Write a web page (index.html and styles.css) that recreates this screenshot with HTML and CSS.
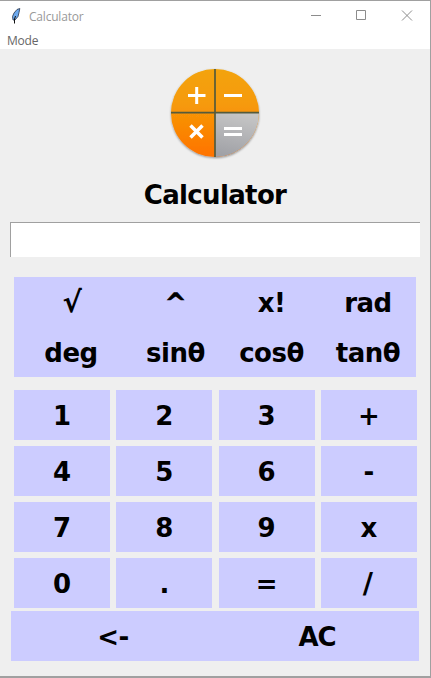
FILE: index.html
```html
<!DOCTYPE html>
<html lang="en">
<head>
<meta charset="utf-8">
<title>Calculator</title>
<link rel="stylesheet" href="styles.css">
</head>
<body>
<div class="window">
  <header class="titlebar">
    <svg class="feather" width="12" height="18" viewBox="0 0 12 18"><path d="M9.800 1.500 L7 2.500 L4 6 L2.500 9.500 L3 13 L5 13 L8 9.500 L9 5.500 Z" fill="#6ca9ee" stroke="#26324a" stroke-width=".8"/><path d="M5.500 9 L4.500 12 L4.500 16.500" fill="none" stroke="#111" stroke-width="1"/></svg>
    <span class="title">Calculator</span>
    <svg class="controls" width="104" height="12" viewBox="0 0 104 12"><g fill="none" stroke="#8c8c8c"><path d="M1 5.500h10M46.500 .5h9v9h-9z"/><path d="M92 .5l10 10M102 .5l-10 10"/></g></svg>
  </header>
  <nav class="menu">Mode</nav>
  <main>
    <svg class="logo" width="98" height="98" viewBox="0 0 98 98">
      <defs>
        <linearGradient id="orange" x1="0" y1="0" x2="0" y2="1"><stop offset="0" stop-color="#f3a307"/><stop offset=".4" stop-color="#f69a08"/><stop offset="1" stop-color="#ff7200"/></linearGradient>
        <linearGradient id="gray" x1=".6" y1="0" x2=".4" y2="1"><stop offset="0" stop-color="#c6c6c6"/><stop offset="1" stop-color="#a0a1a6"/></linearGradient>
        <filter id="shadow" x="-10%" y="-10%" width="120%" height="120%"><feDropShadow dx="0" dy="1" stdDeviation="1" flood-opacity=".4"/></filter>
      </defs>
      <g filter="url(#shadow)"><circle cx="49" cy="48" r="44" fill="url(#orange)"/><path d="M49 48H93A44 44 0 0 1 49 92Z" fill="url(#gray)"/></g>
      <path d="M49 4V92M5 47.700H93" stroke="#545b3c" stroke-width="1.700"/>
      <g stroke="#fff" stroke-width="3" fill="none"><path d="M22 30.500H39.500M30.700 22V39M58 30.500H76M58 63.500H76M58 69.500H76"/><path d="M24.500 60.500L36.500 72.500M36.500 60.500L24.500 72.500" stroke-width="3.500"/></g>
    </svg>
    <h1>Calculator</h1>
    <input class="display" type="text" aria-label="Display">
    <section class="functions">
      <span class="root">√</span><span class="power">^</span><span>x!</span><span class="angle">rad</span>
      <span class="angle">deg</span><span>sinθ</span><span>cosθ</span><span class="angle">tanθ</span>
    </section>
    <section class="keys">
      <button>1</button><button>2</button><button>3</button><button>+</button>
      <button>4</button><button>5</button><button>6</button><button>-</button>
      <button>7</button><button>8</button><button>9</button><button>x</button>
      <button>0</button><button>.</button><button>=</button><button class="divide">/</button>
    </section>
    <section class="actions"><button>&lt;-</button><button class="clear">AC</button></section>
  </main>
</div>
</body>
</html>
```
FILE: styles.css
```css
* { box-sizing: border-box; }
body { margin: 0; background: #efefef; }
.window {
  width: 431px;
  height: 678px;
  border: solid #a0a0a0;
  border-width: 1px 1px 2px 0;
  background: #efefef;
  overflow: hidden;
  font-family: "DejaVu Sans", sans-serif;
}
.titlebar {
  display: flex;
  align-items: center;
  height: 30px;
  padding: 0 16px 0 10px;
  background: #fff;
}
.title {
  margin-left: 7px;
  font: 12px "Open Sans", sans-serif;
  letter-spacing: -.2px;
  color: #999;
}
.controls { margin-left: auto; }
.menu {
  height: 18px;
  padding-left: 7px;
  background: #fff;
  color: #666;
  font: 12px/19px "Open Sans", sans-serif;
  letter-spacing: -.2px;
}
main { display: flex; flex-direction: column; }
.logo { margin: 16px 0 0 166px; }
h1 {
  margin: 15px 0 0;
  height: 34px;
  font-size: 26px;
  line-height: 34px;
  letter-spacing: -.65px;
  text-align: center;
}
.display {
  width: 410px;
  height: 35px;
  margin: 10px 0 0 10px;
  padding: 0 4px;
  border: solid #a0a0a0;
  border-width: 1px 0 0 1px;
  border-radius: 0;
  background: #fff;
  font: bold 24px "DejaVu Sans", sans-serif;
}
.functions {
  display: grid;
  grid-template-columns: 112px 99px 93px 98px;
  grid-template-rows: 50px 50px;
  width: 402px;
  margin: 20px 0 0 14px;
  background: #ccf;
  font-size: 26px;
  font-weight: bold;
  line-height: 52px;
  letter-spacing: -.5px;
  text-align: center;
}
.root {
  padding-left: 4px;
  font-size: 29px;
  line-height: 50px;
}
.power { -webkit-text-stroke: .6px #000; }
.angle { padding-left: 2px; }
.keys {
  display: grid;
  grid-template-columns: repeat(4, 96px);
  grid-auto-rows: 50px;
  justify-content: space-between;
  row-gap: 6px;
  width: 403px;
  margin: 13px 0 0 14px;
}
button {
  border: 0;
  padding: 2px 0 0;
  background: #ccf;
  color: #000;
  font: bold 26px/48px "DejaVu Sans", sans-serif;
}
.divide {
  padding-right: 2px;
  font-size: 28px;
}
.actions {
  display: grid;
  grid-template-columns: 206px 202px;
  height: 50px;
  margin: 3px 0 0 11px;
}
.actions button {
  padding-right: 2px;
  letter-spacing: -.5px;
}
.actions .clear { letter-spacing: -1px; }
```
